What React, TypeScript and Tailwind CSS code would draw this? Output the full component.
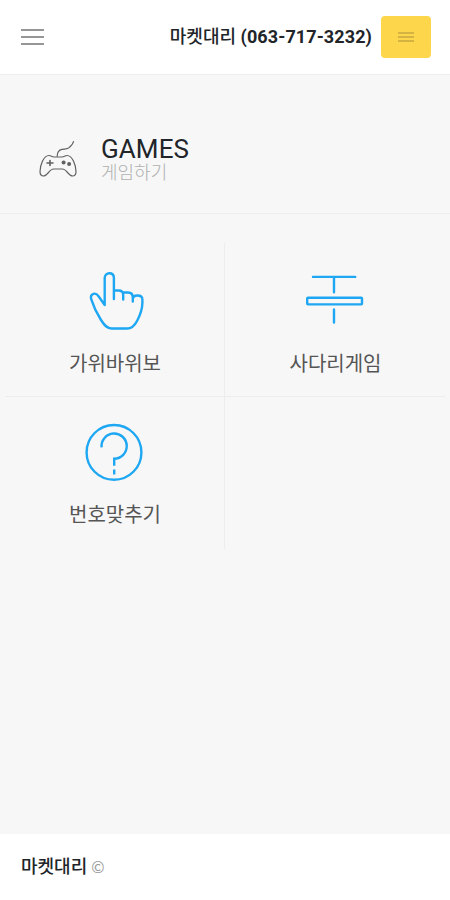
import React from "react";

function HandIcon() {
  return (
    <svg width="60" height="60" viewBox="0 0 60 60" fill="none" stroke="#1ea7f2" strokeWidth="2.4" strokeLinecap="round" strokeLinejoin="round">
      <path d="M19.7 34 13.7 25.5C12 23 10.5 22.2 8.5 22.8 6.4 23.5 5.5 25.7 6.2 28.2 8 34 11.5 42 16 49 19.5 54.5 22 57.5 26.5 57.5H42C46.5 57.5 49.5 55 52 50 55.5 43.5 57.4 36.5 57.4 31.5V28.5C57.4 25 55.2 24.5 52.3 24.5 49.5 24.5 47.8 26 47.8 28.5V30.5M19.7 34V7C19.7 4 21.7 2.3 24.3 2.3S28.9 4 28.9 7V28M28.9 19.5H33.5C36.5 19.5 38.2 21 38.2 24V28.5M38.2 21.5H43C46.3 21.5 47.8 23.4 47.8 26.5V30.5" />
    </svg>
  );
}

function LadderIcon() {
  return (
    <svg width="60" height="60" viewBox="0 0 60 60" fill="none" stroke="#1ea7f2" strokeWidth="2.4" strokeLinecap="round" strokeLinejoin="round">
      <path d="M7 5.9H49.2M28 6V21.3M28 38.5V51.5" />
      <rect x="1.2" y="26.8" width="54.8" height="6.6" rx="0.8" />
    </svg>
  );
}

function QuestionIcon() {
  return (
    <svg width="60" height="60" viewBox="0 0 60 60" fill="none" stroke="#1ea7f2" strokeWidth="2.4" strokeLinecap="butt">
      <circle cx="29" cy="30.4" r="27.4" />
      <path d="M16.6 25.3A12.6 12.6 0 1 1 29.2 36.7V43.8M29.2 47.5V52.5" />
    </svg>
  );
}

function PadIcon() {
  return (
    <svg className="shrink-0" width="38" height="38" viewBox="0 0 38 38" fill="none" stroke="#606060" strokeWidth="1.2" strokeLinecap="round" strokeLinejoin="round">
      <path d="M18.2 16.2C18.2 12 19.5 10 23 9.3 26.5 8.8 28.5 9.3 30.5 7.3 32.2 5.5 33.8 4.5 34.5 1.7" />
      <path d="M10 15.5C12 15.5 13 17 15 17H23C25 17 26 15.5 28 15.5 33.5 15.5 37 25.5 37 31.5 37 34.5 35.5 36 33.5 36 29.5 36 27.5 29 23.5 29H14.5C10.5 29 8.5 36 4.5 36 2.5 36 1 34.5 1 31.5 1 25.5 4.5 15.5 10 15.5Z" />
      <path d="M8 23H14M11 20.5V25.5" strokeWidth="1.6" />
      <g fill="#606060" stroke="none">
        <circle cx="24.6" cy="22.6" r="2" />
        <circle cx="30.1" cy="24.1" r="2" />
      </g>
    </svg>
  );
}

function Tile({ icon, label, className }: { icon: React.ReactNode; label: string; className: string }) {
  return (
    <div className={`flex flex-col items-center border-[#ededed] pl-px ${className}`}>
      {icon}
      <span className="mt-[21px] text-[20px] leading-6 font-normal text-[#555]">{label}</span>
    </div>
  );
}

export default function App() {
  return (
    <div className="flex h-[900px] w-[450px] flex-col bg-[#f7f7f7] font-[Roboto,'Noto_Sans_CJK_KR',sans-serif] text-[#212529]">
      <header className="flex h-[75px] shrink-0 items-center border-b border-[#ededed] bg-white pr-[19px] pl-[21px]">
        <div className="flex w-[23px] flex-col gap-[5px]">
          <div className="h-[2px] bg-[#969696]" />
          <div className="h-[2px] bg-[#969696]" />
          <div className="h-[2px] bg-[#969696]" />
        </div>
        <div className="ml-auto text-[18px] leading-6 font-medium whitespace-nowrap">마켓대리 <span className="font-bold tracking-[0.1px]">(063-717-3232)</span></div>
        <button className="ml-[9px] flex h-[42px] w-[50px] flex-col items-center justify-center gap-[2px] rounded-[4px] bg-[#fdd64b]">
          <span className="h-[2px] w-4 bg-[#d5b343]" />
          <span className="h-[2px] w-4 bg-[#d5b343]" />
          <span className="h-[2px] w-4 bg-[#d5b343]" />
        </button>
      </header>

      <section className="flex h-[139px] shrink-0 border-b border-[#ededed] pt-[65px] pl-[39px]">
        <PadIcon />
        <div className="ml-6">
          <h1 className="mt-[-6px] text-[26px] leading-[30px] tracking-[0.1px]">GAMES</h1>
          <p className="mt-[-3px] text-[18px] leading-6 font-light text-[#b0b0b0]">게임하기</p>
        </div>
      </section>

      <main className="mt-[29px] grid grid-cols-2 px-[5px]">
        <Tile icon={<HandIcon />} label="가위바위보" className="h-[154px] border-r border-b pt-[28px]" />
        <Tile icon={<LadderIcon />} label="사다리게임" className="h-[154px] border-b pt-[28px]" />
        <Tile icon={<QuestionIcon />} label="번호맞추기" className="h-[152px] border-r pt-[25px]" />
        <div />
      </main>

      <footer className="mt-auto flex h-[66px] shrink-0 items-center bg-white pl-[21px] text-[18px] leading-6">
        <span className="font-medium">마켓대리</span>
        <span className="mb-0.5 ml-1 font-['Noto_Sans_CJK_KR',sans-serif] text-[16px] font-normal text-[#999]">©</span>
      </footer>
    </div>
  );
}
